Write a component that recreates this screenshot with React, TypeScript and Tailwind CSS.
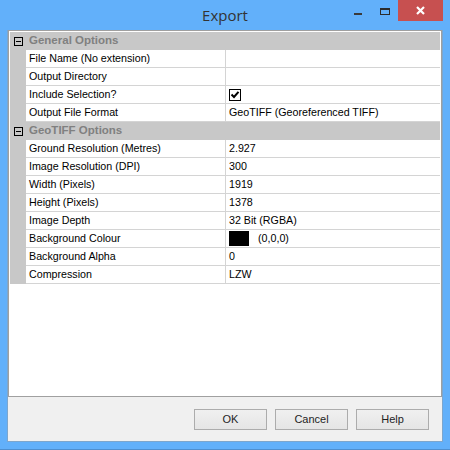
import React from "react";

const font = { fontFamily: '"Liberation Sans", Arial, sans-serif' };

function Check() {
  return (
    <div className="w-[12px] h-[12px] border border-black bg-white flex items-center justify-center">
      <svg width="10" height="10" viewBox="0 0 10 10">
        <path d="M1.5 4.5 L4 7 L8.5 1.8" fill="none" stroke="#000" strokeWidth="2" />
      </svg>
    </div>
  );
}

function Swatch() {
  return (
    <div className="flex items-center">
      <div className="w-[20px] h-[15px] bg-black" />
      <span className="ml-[9px]">(0,0,0)</span>
    </div>
  );
}

type Row = [string, React.ReactNode];

const general: Row[] = [
  ["File Name (No extension)", ""],
  ["Output Directory", ""],
  ["Include Selection?", <Check />],
  ["Output File Format", "GeoTIFF (Georeferenced TIFF)"],
];

const geotiff: Row[] = [
  ["Ground Resolution (Metres)", "2.927"],
  ["Image Resolution (DPI)", "300"],
  ["Width (Pixels)", "1919"],
  ["Height (Pixels)", "1378"],
  ["Image Depth", "32 Bit (RGBA)"],
  ["Background Colour", <Swatch />],
  ["Background Alpha", "0"],
  ["Compression", "LZW"],
];

function Header({ title }: { title: string }) {
  return (
    <div className="flex h-[18px] bg-[#c8c8c8] items-center">
      <div className="w-[16px] shrink-0 flex items-center justify-center">
        <div className="w-[9px] h-[9px] border border-black bg-[#c8c8c8] flex items-center justify-center">
          <div className="w-[5px] h-[1px] bg-black" />
        </div>
      </div>
      <span className="pl-[3px] font-bold text-[11.5px] text-[#808080]">{title}</span>
    </div>
  );
}

function PropRow({ label, value }: { label: string; value: React.ReactNode }) {
  return (
    <div className="flex h-[18px]">
      <div className="w-[16px] shrink-0 bg-[#c8c8c8]" />
      <div className="flex flex-1 border-b border-[#d4d4d4]">
        <div className="w-[200px] shrink-0 border-r border-[#d4d4d4] pl-[3px] flex items-center whitespace-nowrap">
          {label}
        </div>
        <div className="flex-1 pl-[3px] flex items-center whitespace-nowrap">{value}</div>
      </div>
    </div>
  );
}

function Btn({ children }: { children: React.ReactNode }) {
  return (
    <div className="w-[73px] h-[21px] border border-[#acacac] bg-gradient-to-b from-[#f0f0f0] to-[#e5e5e5] flex items-center justify-center text-[11px] text-[#1e1e1e]">
      {children}
    </div>
  );
}

export default function App() {
  return (
    <div className="w-[450px] h-[450px] bg-[#62b0fa] flex flex-col border-b border-[#4f8fcf]" style={font}>
      <div className="h-[30px] shrink-0 grid grid-cols-[1fr_auto_1fr]">
        <div />
        <div
          className="flex items-center justify-center text-[15px] text-[#333333] pt-[1px]"
          style={{ fontFamily: '"Open Sans", "Noto Sans", sans-serif' }}
        >
          Export
        </div>
        <div className="flex justify-end items-start pr-[7px]">
          <div className="w-[26px] h-[21px] flex items-center justify-center">
            <div className="w-[8px] h-[2px] bg-[#3a3a3a] mt-[7px]" />
          </div>
          <div className="w-[27px] h-[21px] flex items-center justify-center">
            <div className="w-[10px] h-[7px] border border-t-2 border-[#2b2b2b] mt-[1px]" />
          </div>
          <div className="w-[45px] h-[21px] bg-[#c75050] flex items-center justify-center">
            <svg width="9" height="9" viewBox="0 0 9 9">
              <path d="M1 1 L8 8 M8 1 L1 8" stroke="#fff" strokeWidth="2.2" />
            </svg>
          </div>
        </div>
      </div>
      <div className="flex-1 mx-[7px] mb-[7px] border-x border-b border-[#7ea6cc] bg-[#f0f0f0] flex flex-col">
        <div className="flex-1 border border-[#a0a0a0] bg-white p-[1px] text-[10.7px] text-black">
          <Header title="General Options" />
          {general.map(([l, v]) => (
            <PropRow key={l} label={l} value={v} />
          ))}
          <Header title="GeoTIFF Options" />
          {geotiff.map(([l, v]) => (
            <PropRow key={l} label={l} value={v} />
          ))}
        </div>
        <div className="h-[44px] shrink-0 flex items-start justify-end gap-[8px] pt-[12px] pr-[13px]">
          <Btn>OK</Btn>
          <Btn>Cancel</Btn>
          <Btn>Help</Btn>
        </div>
      </div>
    </div>
  );
}
